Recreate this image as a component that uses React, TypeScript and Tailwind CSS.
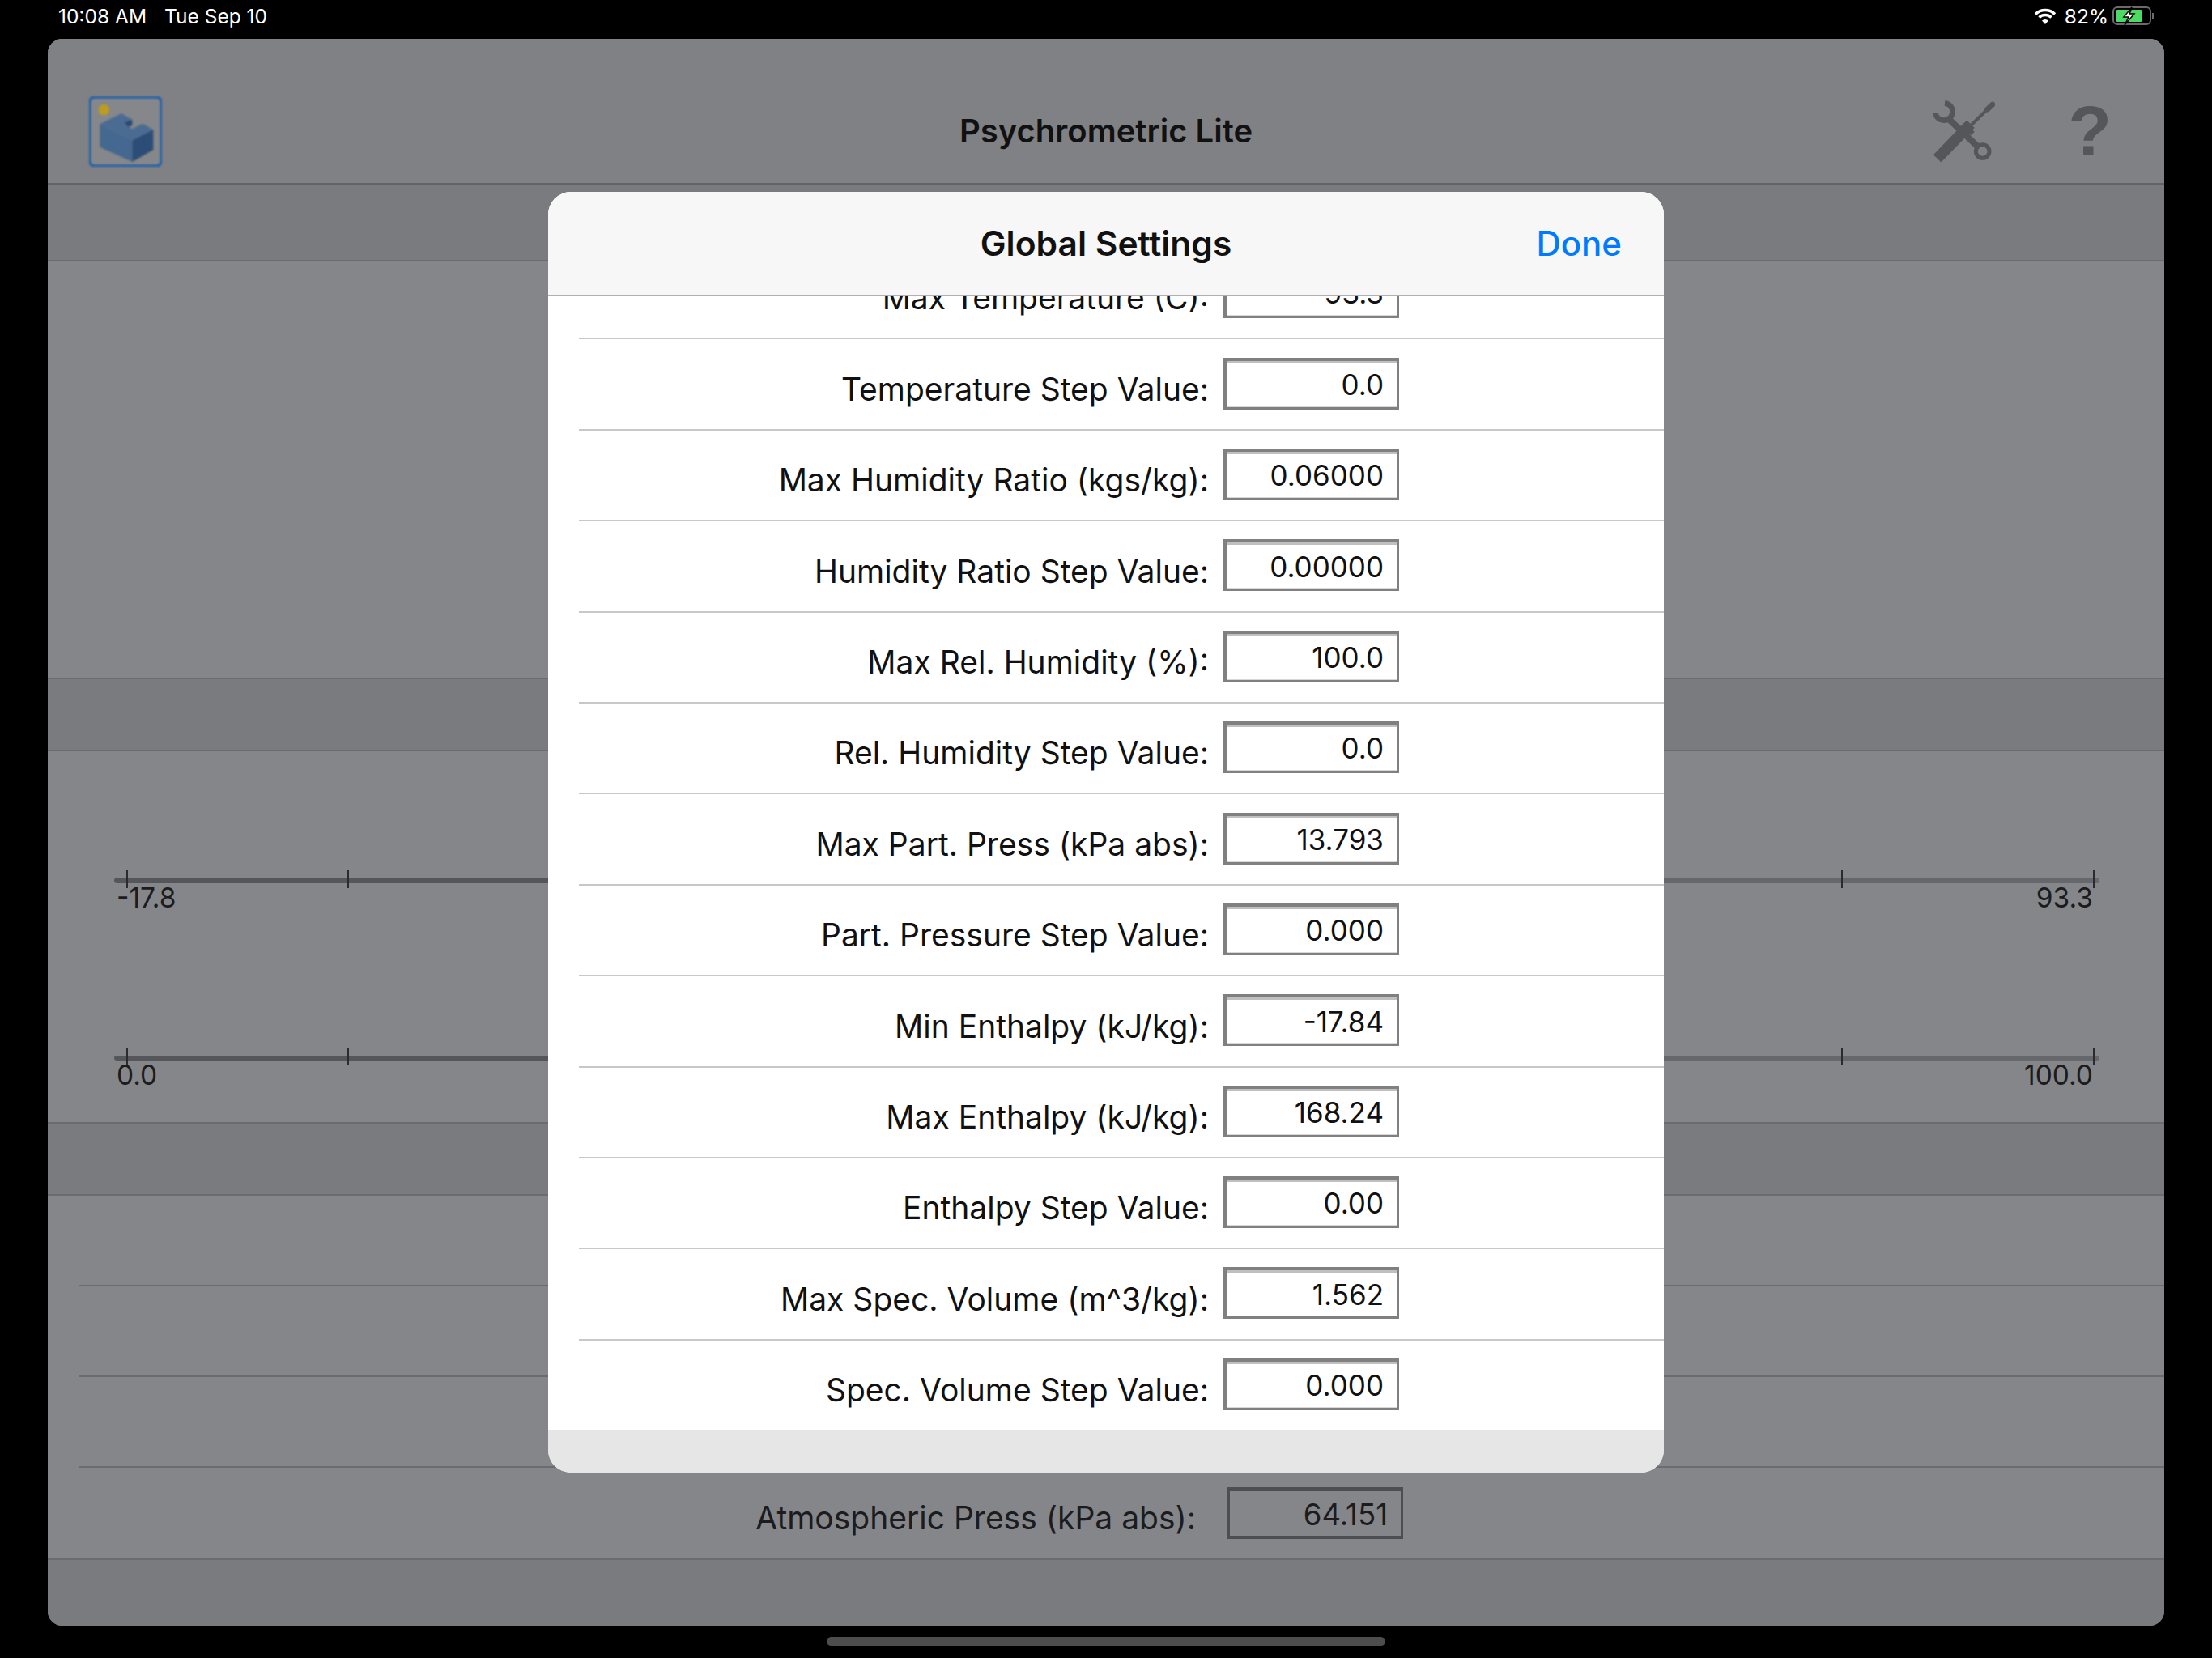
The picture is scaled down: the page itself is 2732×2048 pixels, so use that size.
const settings = [
  ['Max Temperature (C):', '93.3'],
  ['Temperature Step Value:', '0.0'],
  ['Max Humidity Ratio (kgs/kg):', '0.06000'],
  ['Humidity Ratio Step Value:', '0.00000'],
  ['Max Rel. Humidity (%):', '100.0'],
  ['Rel. Humidity Step Value:', '0.0'],
  ['Max Part. Press (kPa abs):', '13.793'],
  ['Part. Pressure Step Value:', '0.000'],
  ['Min Enthalpy (kJ/kg):', '-17.84'],
  ['Max Enthalpy (kJ/kg):', '168.24'],
  ['Enthalpy Step Value:', '0.00'],
  ['Max Spec. Volume (m^3/kg):', '1.562'],
  ['Spec. Volume Step Value:', '0.000'],
];

function Logo() {
  return (
    <svg width="90" height="87" viewBox="30 27 270 261" className="blur-[0.8px]">
      <rect x="33" y="30" width="264" height="255" rx="18" fill="#86878b" stroke="#2462a8" strokeWidth="10" />
      <circle cx="85" cy="77" r="20" fill="#bd9c20" />
      <polygon points="70,130 190,190 190,270 70,215" fill="#456890" />
      <polygon points="190,190 268,150 268,225 190,270" fill="#2c4d75" />
      <polygon points="70,130 150,90 190,113 160,130 190,148 228,128 268,150 190,190" fill="#4a6c93" />
      <polygon points="160,125 190,113 190,135 175,140" fill="#2c4a70" />
    </svg>
  );
}

function ToolsIcon() {
  return (
    <svg width="78" height="78" viewBox="20 20 234 234" fill="none" stroke="#55565a" strokeLinecap="round">
      <path d="M68 33 A32 32 0 1 1 33 70" strokeWidth="20" strokeLinecap="butt" />
      <path d="M78 88 L188 192" strokeWidth="24" strokeLinecap="butt" />
      <circle cx="208" cy="212" r="25" strokeWidth="15" />
      <path d="M150 125 L54 224" strokeWidth="40" strokeLinecap="square" />
      <path d="M150 130 L232 50" strokeWidth="12" />
      <path d="M226 56 L245 38" strokeWidth="20" />
      <path d="M135 111 L172 146" strokeWidth="18" strokeLinecap="butt" />
    </svg>
  );
}

function Wifi() {
  return (
    <svg width="28" height="20" viewBox="0 0 28 20" fill="none" stroke="#fff" strokeWidth="3.5">
      <path d="M2 7.5 A17 17 0 0 1 26 7.5" />
      <path d="M6.5 11.5 A11 11 0 0 1 21.5 11.5" />
      <path d="M14 20 L10 15.5 A6 6 0 0 1 18 15.5 Z" fill="#fff" stroke="none" />
    </svg>
  );
}

function Battery() {
  return (
    <svg width="54" height="24" viewBox="0 0 54 24">
      <rect x="1" y="1" width="46" height="21" rx="5" fill="none" stroke="#6b6b6b" strokeWidth="2" />
      <rect x="4" y="4" width="33" height="15" rx="2" fill="#4cd964" />
      <path d="M24 1 L14 13 L20 13 L15 23 L27 9 L21 9 Z" fill="#fff" stroke="#000" strokeWidth="1.5" />
      <rect x="49" y="8" width="2" height="7" fill="#6b6b6b" />
    </svg>
  );
}

function Slider({ barClass, left, right }: { barClass: string; left: string; right: string }) {
  return (
    <div className="ml-[82px] w-[2452px]">
      <div className="relative h-[22px] flex items-center">
        <div className={`w-full rounded-full mt-[3px] ${barClass}`} />
        {/* tick marks sit over the track */}
        <div className="absolute top-0 left-[15px] w-[2px] h-[22px] bg-[#2a2b2e]" />
        <div className="absolute top-0 left-[288px] w-[2px] h-[22px] bg-[#2a2b2e]" />
        <div className="absolute top-0 left-[2133px] w-[2px] h-[22px] bg-[#2a2b2e]" />
        <div className="absolute top-0 left-[2444px] w-[2px] h-[22px] bg-[#2a2b2e]" />
      </div>
      <div className="flex justify-between pl-[3px] pr-[8px] text-[33.5px] leading-[24px] text-[#1c1c1e]">
        <span>{left}</span>
        <span>{right}</span>
      </div>
    </div>
  );
}

function SettingRow({ label, value }: { label: string; value: string }) {
  return (
    <div className="h-[112.4px] ml-[38px] flex items-center border-b-2 border-[#c8c8cc]">
      <div className="w-[778px] text-right text-[39px] text-[#111] pt-[13px]">{label}</div>
      <div className="ml-[18px] mb-[2px] w-[217px] h-[64px] flex items-center justify-end pr-[16px] pt-[2px] bg-white text-[35px] text-[#111] border-solid border-[#808080] border-t-[4px] border-l-[4px] border-r-[3px] border-b-[3px] shadow-[inset_0_3px_0_#c0c0c0,inset_1px_0_0_#c8c8c8,inset_0_-1px_0_#d8d8d8]">
        {value}
      </div>
    </div>
  );
}

export default function App() {
  return (
    <div className="relative w-[2732px] h-[2048px] overflow-hidden bg-black font-['Inter','Liberation_Sans',sans-serif]">
      {/* status bar */}
      <div className="h-[48px] flex items-center justify-between pl-[72px] pr-[69px] text-white text-[24.5px] pb-[8px]">
        <div className="flex gap-[22px]">
          <span>10:08 AM</span>
          <span>Tue Sep 10</span>
        </div>
        <div className="flex items-center gap-[5px]">
          <Wifi />
          <span className="ml-[5px]">82%</span>
          <Battery />
        </div>
      </div>

      {/* dimmed app behind the sheet */}
      <div className="ml-[59px] w-[2614px] h-[1960px] rounded-[18px] overflow-hidden bg-[#85868a] flex flex-col">
        <div className="h-[180px] pt-[50px] grid grid-cols-[1fr_auto_1fr] items-center bg-[#808185] border-b-2 border-[#626367]">
          <div className="pl-[51px]">
            <Logo />
          </div>
          <div className="text-[40px] font-semibold text-[#111]">Psychrometric Lite</div>
          <div className="flex justify-end items-center gap-[90px] pr-[65px]">
            <ToolsIcon />
            <span className="text-[88px] leading-[88px] font-bold text-[#55565a] font-['Liberation_Sans',sans-serif]">?</span>
          </div>
        </div>
        <div className="h-[95px] bg-[#7a7b7f] border-b-2 border-[#6b6c70]" />
        <div className="h-[514px]" />
        <div className="h-[91px] bg-[#7a7b7f] border-y-2 border-[#6b6c70]" />
        <div className="h-[458px] pt-[147px] flex flex-col">
          <Slider barClass="h-[7px] bg-[linear-gradient(90deg,#55565a_50%,#66676b_50%)]" left="-17.8" right="93.3" />
          <div className="h-[173px]" />
          <Slider barClass="h-[6px] bg-[linear-gradient(90deg,#55565a_50%,#66676b_50%)]" left="0.0" right="100.0" />
        </div>
        <div className="h-[91px] bg-[#7a7b7f] border-y-2 border-[#6b6c70]" />
        <div className="h-[448px] flex flex-col">
          <div className="h-[112px] ml-[38px] border-b-2 border-[#6b6c70]" />
          <div className="h-[112px] ml-[38px] border-b-2 border-[#6b6c70]" />
          <div className="h-[112px] ml-[38px] border-b-2 border-[#6b6c70]" />
          <div className="h-[112px] ml-[38px] flex items-center">
            <div className="w-[1380px] text-right text-[39px] text-[#1c1c1e] pt-[13px]">Atmospheric Press (kPa abs):</div>
            <div className="ml-[39px] w-[217px] h-[64px] flex items-center justify-end pr-[16px] pt-[4px] text-[36.5px] text-[#1c1c1e] border-solid border-[#4d4e52] border-t-[5px] border-l-[3px] border-r-[3px] border-b-[4px]">
              64.151
            </div>
          </div>
        </div>
        <div className="flex-1 bg-[#7a7b7f] border-t-2 border-[#6b6c70]" />
      </div>

      {/* home indicator */}
      <div className="mt-[14px] mx-auto w-[690px] h-[11px] rounded-full bg-[#4d4d4d]" />

      {/* Global Settings sheet */}
      <div className="absolute left-[677px] top-[237px] w-[1378px] h-[1582px] rounded-[28px] overflow-hidden bg-white flex flex-col">
        <div className="relative h-[129px] shrink-0 z-10 flex items-center justify-center bg-[#f7f7f7] border-b-2 border-[#b0b0b2]">
          <span className="text-[42.5px] font-semibold text-[#111]">Global Settings</span>
          <span className="absolute right-[52px] text-[42px] font-medium text-[#007aff]">Done</span>
        </div>
        <div className="flex-1 overflow-hidden">
          <div className="-mt-[59px]">
            {settings.map(([label, value]) => (
              <SettingRow key={label} label={label} value={value} />
            ))}
          </div>
        </div>
        <div className="h-[53px] shrink-0 bg-[#e6e6e6]" />
      </div>
    </div>
  );
}
